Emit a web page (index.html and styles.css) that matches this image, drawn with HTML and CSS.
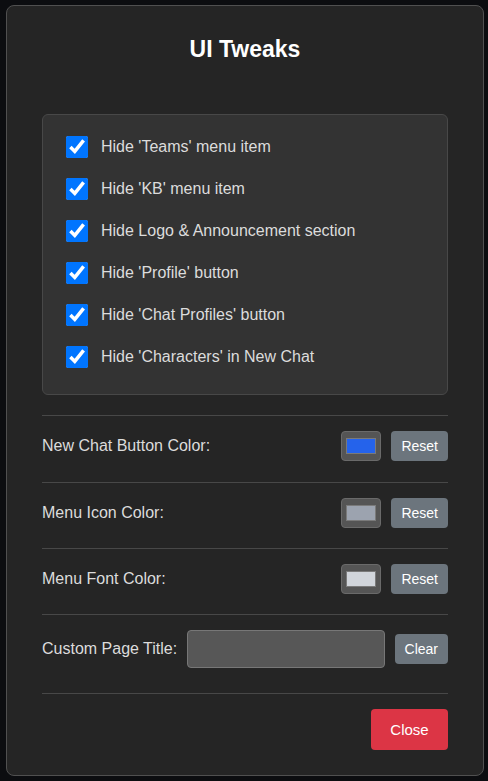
FILE: index.html
```html
<!DOCTYPE html>
<html lang="en">
<head>
<meta charset="utf-8">
<title>UI Tweaks</title>
<link rel="stylesheet" href="styles.css">
</head>
<body>
<div class="modal">
  <h2 class="title">UI Tweaks</h2>
  <div class="checks">
    <label class="check"><input type="checkbox" checked><span>Hide 'Teams' menu item</span></label>
    <label class="check"><input type="checkbox" checked><span>Hide 'KB' menu item</span></label>
    <label class="check"><input type="checkbox" checked><span>Hide Logo &amp; Announcement section</span></label>
    <label class="check"><input type="checkbox" checked><span>Hide 'Profile' button</span></label>
    <label class="check"><input type="checkbox" checked><span>Hide 'Chat Profiles' button</span></label>
    <label class="check"><input type="checkbox" checked><span>Hide 'Characters' in New Chat</span></label>
  </div>
  <div class="row row-first">
    <span class="label">New Chat Button Color:</span>
    <span class="swatch"><span class="swatch-fill fill-blue"></span></span>
    <button class="btn btn-gray">Reset</button>
  </div>
  <div class="row">
    <span class="label">Menu Icon Color:</span>
    <span class="swatch"><span class="swatch-fill fill-gray"></span></span>
    <button class="btn btn-gray">Reset</button>
  </div>
  <div class="row">
    <span class="label">Menu Font Color:</span>
    <span class="swatch"><span class="swatch-fill fill-light"></span></span>
    <button class="btn btn-gray">Reset</button>
  </div>
  <div class="row row-input">
    <span class="label label-fixed">Custom Page Title:</span>
    <input class="text-input" type="text">
    <button class="btn btn-gray btn-clear">Clear</button>
  </div>
  <div class="footer">
    <button class="btn btn-red">Close</button>
  </div>
</div>
</body>
</html>
```

FILE: styles.css
```css
* { box-sizing: border-box; }
html, body {
  margin: 0;
  padding: 0;
  background: #0c0d10;
  font-family: "Liberation Sans", Arial, sans-serif;
}
body { padding: 5px 4px 0 6px; }
.modal {
  width: 478px;
  background: #252525;
  border: 1px solid #505050;
  border-radius: 8px;
  padding: 30px 35px 25px 35px;
  color: #dcdcdc;
}
.title {
  margin: 0 0 52px;
  text-align: center;
  font-size: 23px;
  line-height: 26px;
  font-weight: bold;
  color: #ffffff;
}
.checks {
  background: #333333;
  border: 1px solid #484848;
  border-radius: 6px;
  padding: 21px 22px 26px 23px;
  display: flex;
  flex-direction: column;
  gap: 20px;
  margin-bottom: 20px;
}
.check {
  display: flex;
  align-items: center;
  gap: 13px;
  height: 22px;
  font-size: 16px;
  color: #dcdcdc;
}
.check input {
  margin: 0;
  width: 22px;
  height: 22px;
  accent-color: #0075ff;
}
.row {
  display: flex;
  align-items: center;
  gap: 10px;
  border-top: 1px solid #484848;
  padding: 15px 0 20px;
  font-size: 16px;
}
.row-first { padding-bottom: 21px; }
.label { flex: 1; }
.label-fixed { flex: none; }
.swatch {
  width: 40px;
  height: 30px;
  background: #555555;
  border: 1px solid #6a6a6a;
  border-radius: 4px;
  padding: 6px 4px;
  display: flex;
}
.swatch-fill {
  flex: 1;
  border: 1px solid #7a7a7a;
}
.fill-blue { background: #2563eb; }
.fill-gray { background: #9ca3af; }
.fill-light { background: #d1d5db; }
.btn {
  border: none;
  border-radius: 4px;
  color: #ffffff;
  font-family: "Liberation Sans", Arial, sans-serif;
  cursor: pointer;
}
.btn-gray {
  background: #6c757d;
  height: 30px;
  padding: 0 10px;
  font-size: 14px;
}
.row-input { padding-bottom: 25px; }
.text-input {
  flex: 1;
  min-width: 0;
  height: 38px;
  background: #575757;
  border: 1px solid #777777;
  border-radius: 4px;
  color: #ffffff;
}
.footer {
  border-top: 1px solid #484848;
  padding-top: 15px;
  display: flex;
  justify-content: flex-end;
}
.btn-red {
  background: #dc3545;
  height: 41px;
  width: 77px;
  font-size: 15px;
}
```
